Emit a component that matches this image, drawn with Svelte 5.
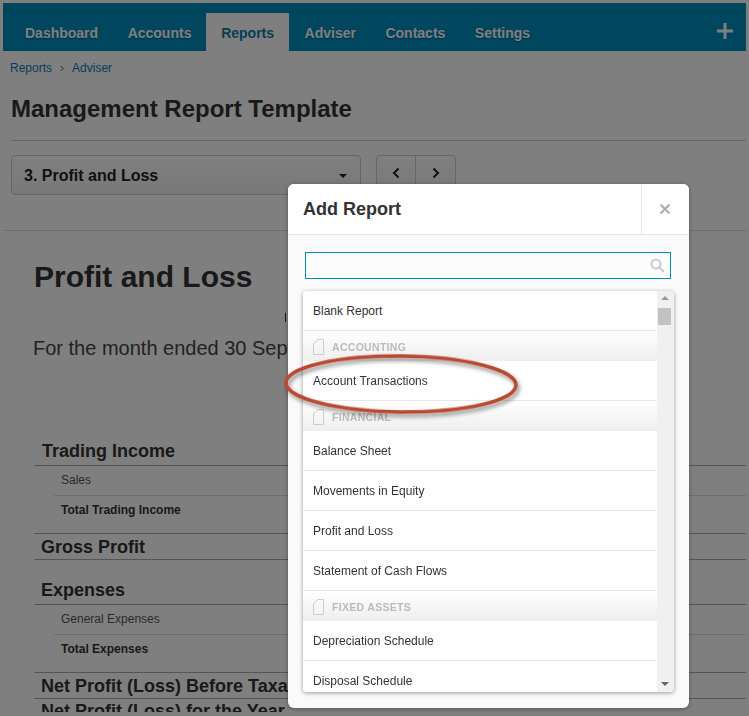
<script>
	const tabs = ['Dashboard', 'Accounts', 'Reports', 'Adviser', 'Contacts', 'Settings'];

	const reportRows = [
		{ label: 'Blank Report' },
		{ label: 'ACCOUNTING', group: true },
		{ label: 'Account Transactions' },
		{ label: 'FINANCIAL', group: true },
		{ label: 'Balance Sheet' },
		{ label: 'Movements in Equity' },
		{ label: 'Profit and Loss' },
		{ label: 'Statement of Cash Flows' },
		{ label: 'FIXED ASSETS', group: true },
		{ label: 'Depreciation Schedule' },
		{ label: 'Disposal Schedule' }
	];
</script>

<div class="page">
	<nav class="topnav">
		<ul>
			{#each tabs as tab}
				<li class:active={tab === 'Reports'}>{tab}</li>
			{/each}
		</ul>
		<svg class="plus" viewBox="0 0 16 16" width="16" height="16"><path d="M6.500 0h3v6.500H16v3H9.500V16h-3V9.500H0v-3h6.500z" /></svg>
	</nav>

	<div class="crumbs"><span>Reports</span><i>›</i><span>Adviser</span></div>
	<h1>Management Report Template</h1>

	<div class="toolbar">
		<div class="select">
			<span>3. Profit and Loss</span>
			<b class="caret"></b>
		</div>
		<div class="pager">
			<button aria-label="Previous"><svg viewBox="0 0 8 12" width="8" height="12"><path d="M6.500 1.500 2 6l4.500 4.500" /></svg></button>
			<button aria-label="Next"><svg viewBox="0 0 8 12" width="8" height="12"><path d="M1.500 1.500 6 6l-4.500 4.500" /></svg></button>
		</div>
	</div>

	<section class="report">
		<h2>Profit and Loss</h2>
		<div class="org"><b></b></div>
		<p class="period">For the month ended 30 September 2015</p>

		<div class="sheet">
			<div class="head first">Trading Income</div>
			<div class="row">Sales</div>
			<div class="row total">Total Trading Income</div>
			<div class="head summary">Gross Profit</div>
			<div class="head expenses">Expenses</div>
			<div class="row">General Expenses</div>
			<div class="row total">Total Expenses</div>
			<div class="head summary">Net Profit (Loss) Before Taxation</div>
			<div class="head last">Net Profit (Loss) for the Year</div>
		</div>
	</section>
</div>

<div class="overlay"></div>

<div class="modal">
	<header>
		<h3>Add Report</h3>
		<div class="close">
			<svg viewBox="0 0 10 10" width="10" height="10"><path d="M.5.5l9 9M9.500.5l-9 9" /></svg>
		</div>
	</header>
	<div class="modal-body">
		<div class="search">
			<svg viewBox="0 0 15 15" width="15" height="15"><circle cx="6" cy="6" r="4.500" /><path d="M9.500 9.500 14 14" /></svg>
		</div>
		<div class="list">
			<div class="rows">
				{#each reportRows as row}
					{#if row.group}
						<div class="group">
							<svg viewBox="0 0 11 16" width="11" height="16"><path d="M.5 4.500 5 .5h5.500v15H.5z" /></svg>
							<span>{row.label}</span>
						</div>
					{:else}
						<div class="item">{row.label}</div>
					{/if}
				{/each}
			</div>
			<div class="scrollbar">
				<b class="arrow up"></b>
				<div class="thumb"></div>
				<b class="arrow down"></b>
			</div>
		</div>
	</div>
</div>

<svg class="callout" viewBox="0 0 250 76" width="250" height="76">
	<defs>
		<filter id="callout-shadow" x="-10%" y="-20%" width="120%" height="150%">
			<feDropShadow dx="2" dy="3" stdDeviation="2" flood-color="#000" flood-opacity="0.45" />
		</filter>
	</defs>
	<ellipse cx="118" cy="34" rx="115" ry="28" transform="rotate(0.6 118 34)" filter="url(#callout-shadow)" />
</svg>

<style>
	:global(body) {
		margin: 0;
		background: #fff;
		overflow: hidden;
		font-family: 'Liberation Sans', Arial, sans-serif;
	}

	.page {
		box-sizing: border-box;
		width: 749px;
		height: 712px;
		padding: 3px 3px 0;
		overflow: hidden;
		color: #333;
		background: #fff;
	}

	.topnav {
		display: flex;
		justify-content: space-between;
		align-items: flex-end;
		height: 48px;
		padding: 0 13px 0 7.250px;
		background: linear-gradient(#008dbf 0 9px, #0085b5 9px 10px, #008dbf 10px);
		box-sizing: border-box;
	}
	.topnav ul {
		display: flex;
		margin: 0;
		padding: 0;
		list-style: none;
	}
	.topnav li {
		padding: 0 14.750px;
		height: 38px;
		line-height: 41px;
		font-size: 14px;
		font-weight: 700;
		color: #fff;
		text-shadow: 0 1px 1px rgba(0, 0, 0, 0.3);
	}
	.topnav li.active {
		padding: 0 15px;
		margin-right: 0.750px;
		background: #fff;
		color: #0a7cab;
		text-shadow: none;
	}
	.plus {
		fill: #fff;
		margin-bottom: 12px;
	}

	.crumbs {
		display: flex;
		align-items: center;
		gap: 8px;
		height: 33px;
		padding-left: 7px;
		font-size: 12px;
		color: #0a7cab;
	}
	.crumbs i {
		font-style: normal;
		color: #777;
	}

	h1 {
		margin: 9px 0 0 8px;
		font-size: 24px;
		line-height: 32px;
		font-weight: 700;
		color: #333;
	}

	.toolbar {
		display: flex;
		gap: 15px;
		margin: 15px 0 0 8px;
		padding-top: 14px;
		border-top: 1px solid #ccc;
		height: 60px;
	}
	.select {
		box-sizing: border-box;
		display: flex;
		align-items: center;
		justify-content: space-between;
		width: 350px;
		height: 40px;
		padding: 1px 13px 0 12px;
		border: 1px solid #ccc;
		border-radius: 4px;
		background: linear-gradient(#fff, #f2f2f2);
		font-size: 16px;
		font-weight: 700;
		color: #222;
	}
	.caret {
		border: 4px solid transparent;
		border-top-color: #222;
		border-bottom: 0;
	}
	.pager {
		display: flex;
		height: 40px;
	}
	.pager button {
		box-sizing: border-box;
		display: flex;
		align-items: center;
		justify-content: center;
		width: 40px;
		height: 40px;
		padding: 0 0 4px;
		border: 1px solid #ccc;
		border-left: 0;
		background: linear-gradient(#fff, #f2f2f2);
	}
	.pager button:first-child {
		border-left: 1px solid #ccc;
		border-radius: 4px 0 0 4px;
	}
	.pager button:last-child {
		border-radius: 0 4px 4px 0;
	}
	.pager path {
		fill: none;
		stroke: #222;
		stroke-width: 2;
	}

	.report {
		border-top: 1px solid #ddd;
		margin-top: 15px;
		padding: 0 0 0 31px;
	}
	h2 {
		margin: 27px 0 0;
		font-size: 30px;
		line-height: 38px;
		font-weight: 700;
		color: #333;
	}
	/* company name is washed out in the source, only the sliver by the dialog shows */
	.org {
		display: flex;
		align-items: center;
		justify-content: flex-end;
		width: 252px;
		height: 24px;
		margin-top: 9px;
	}
	.org b {
		width: 1.500px;
		height: 9px;
		background: #1d3f5e;
	}
	.period {
		margin: 6px 0 0 -1px;
		font-size: 20px;
		line-height: 26px;
		color: #444;
		white-space: nowrap;
	}

	.sheet {
		margin-top: 76px;
		white-space: nowrap;
	}
	.head {
		box-sizing: border-box;
		padding-left: 7px;
		font-size: 18px;
		font-weight: 700;
		color: #333;
		border-bottom: 1px solid #aaa;
	}
	.head.first {
		height: 29px;
		line-height: 28px;
		padding-left: 8px;
	}
	.head.summary {
		height: 27px;
		line-height: 26px;
		border-top: 1px solid #aaa;
	}
	.head.expenses {
		margin-top: 17px;
		height: 28px;
		line-height: 27px;
	}
	.head.last {
		height: 24px;
		line-height: 24px;
		border-bottom: 0;
	}
	.row {
		box-sizing: border-box;
		height: 30px;
		margin-left: 20px;
		padding-left: 7px;
		line-height: 29px;
		font-size: 12px;
		color: #555;
		border-bottom: 1px solid #ddd;
	}
	.row.total {
		height: 37px;
		line-height: 29px;
		border-bottom: 0;
		font-weight: 700;
		color: #333;
	}

	.overlay {
		position: fixed;
		inset: 0;
		background: rgba(0, 0, 0, 0.5);
	}

	.modal {
		position: absolute;
		left: 288px;
		top: 184px;
		width: 401px;
		height: 524px;
		border-radius: 6px;
		background: #fafafa;
		box-shadow: 0 1px 4px rgba(0, 0, 0, 0.35);
		overflow: hidden;
	}
	.modal header {
		display: flex;
		justify-content: space-between;
		height: 50px;
		background: #fff;
		border-bottom: 1px solid #e5e5e5;
	}
	.modal h3 {
		margin: 0;
		padding-left: 15px;
		font-size: 18px;
		line-height: 50px;
		font-weight: 700;
		color: #333;
	}
	.close {
		display: flex;
		align-items: center;
		justify-content: center;
		width: 48px;
		padding-right: 2px;
		box-sizing: border-box;
		border-left: 1px solid #e5e5e5;
	}
	.close path {
		fill: none;
		stroke: #aaa;
		stroke-width: 2;
	}
	.modal-body {
		padding: 17px 15px 0;
	}
	.search {
		box-sizing: border-box;
		display: flex;
		align-items: center;
		justify-content: flex-end;
		width: 366px;
		height: 27px;
		margin-left: 2px;
		padding-right: 5px;
		border: 1px solid #0091c4;
		background: #fcfcfc;
	}
	.search circle,
	.search path {
		fill: none;
		stroke: #ccc;
		stroke-width: 2.200;
	}
	.list {
		display: flex;
		width: 371px;
		height: 401px;
		margin-top: 12px;
		border-radius: 4px;
		background: #fff;
		box-shadow: 0 1px 4px rgba(0, 0, 0, 0.4);
		overflow: hidden;
	}
	.rows {
		flex: 1;
		min-width: 0;
	}
	.item {
		box-sizing: border-box;
		height: 40px;
		padding-left: 10px;
		line-height: 41px;
		font-size: 12px;
		color: #333;
		background: #fff;
		border-bottom: 1px solid #e8e8e8;
	}
	.group {
		box-sizing: border-box;
		display: flex;
		align-items: center;
		gap: 8px;
		height: 30px;
		padding-left: 10px;
		padding-top: 1px;
		background: linear-gradient(#fff, #eee);
		font-size: 10.500px;
		font-weight: 700;
		letter-spacing: 0.3px;
		color: #bbb;
	}
	.group svg {
		flex: none;
	}
	.group path {
		fill: none;
		stroke: #ccc;
	}
	.scrollbar {
		position: relative;
		flex: none;
		width: 17px;
		background: #f0f0f0;
	}
	.thumb {
		position: absolute;
		top: 17px;
		left: 1px;
		width: 13px;
		height: 17px;
		background: #c2c2c2;
	}
	.arrow {
		position: absolute;
		left: 4px;
		border: 4px solid transparent;
	}
	.arrow.up {
		top: 5px;
		border-top: 0;
		border-bottom-color: #999;
	}
	.arrow.down {
		bottom: 6px;
		border-bottom: 0;
		border-top-color: #666;
	}

	.callout {
		position: absolute;
		left: 283px;
		top: 350px;
	}
	.callout ellipse {
		fill: none;
		stroke: #b94a30;
		stroke-width: 3.500;
	}
</style>
